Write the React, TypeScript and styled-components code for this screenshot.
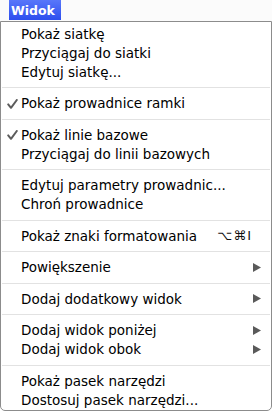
import React from "react";
import styled, { createGlobalStyle } from "styled-components";

const GlobalStyle = createGlobalStyle`
  body {
    margin: 0;
    background: #ffffff;
    font-family: "DejaVu Sans", "Liberation Sans", sans-serif;
  }
`;

const Screen = styled.div`
  width: 272px;
  height: 412px;
  overflow: hidden;
  background: #ffffff;
`;

const MenuBar = styled.div`
  height: 21px;
  display: flex;
  align-items: stretch;
  padding-left: 9px;
  background: #fbfbfb;
`;

const MenuTitle = styled.div`
  width: 52px;
  height: 20px;
  display: flex;
  align-items: center;
  padding-left: 2px;
  box-sizing: border-box;
  color: #ffffff;
  font-size: 12.5px;
  font-weight: bold;
  background: linear-gradient(#5877fa, #2d4eee);
`;

const Panel = styled.div`
  width: 270px;
  border: 1px solid #8c8c8c;
  border-radius: 0 0 5px 5px;
  background: #ffffff;
  padding: 2px 0 1px;
`;

const Item = styled.div`
  position: relative;
  height: 19px;
  display: flex;
  align-items: center;
  padding: 0 10px 0 20px;
  font-size: 13.5px;
  color: #000000;
  white-space: nowrap;
`;

const Label = styled.span`
  flex: 1;
`;

const Check = styled.svg`
  position: absolute;
  left: 6px;
  top: 5px;
`;

const Shortcut = styled.span`
  font-size: 13px;
  color: #111111;
  margin-right: 9px;
  letter-spacing: 1px;
`;

const Arrow = styled.svg`
  flex: none;
`;

const Separator = styled.div`
  height: 1px;
  margin: 6px 1px 5.5px;
  background: #e2e2e2;
`;

type Entry = {
  label: string;
  checked?: boolean;
  shortcut?: string;
  submenu?: boolean;
};

const groups: Entry[][] = [
  [
    { label: "Pokaż siatkę" },
    { label: "Przyciągaj do siatki" },
    { label: "Edytuj siatkę..." },
  ],
  [{ label: "Pokaż prowadnice ramki", checked: true }],
  [
    { label: "Pokaż linie bazowe", checked: true },
    { label: "Przyciągaj do linii bazowych" },
  ],
  [{ label: "Edytuj parametry prowadnic..." }, { label: "Chroń prowadnice" }],
  [{ label: "Pokaż znaki formatowania", shortcut: "⌥⌘I" }],
  [{ label: "Powiększenie", submenu: true }],
  [{ label: "Dodaj dodatkowy widok", submenu: true }],
  [
    { label: "Dodaj widok poniżej", submenu: true },
    { label: "Dodaj widok obok", submenu: true },
  ],
  [{ label: "Pokaż pasek narzędzi" }, { label: "Dostosuj pasek narzędzi..." }],
];

function MenuItem({ entry }: { entry: Entry }) {
  return (
    <Item>
      {entry.checked && (
        <Check width="11" height="10" viewBox="0 0 11 10">
          <path
            d="M1.2 5.4 L4 8.8 L9.8 1"
            fill="none"
            stroke="#5c5c5c"
            strokeWidth="2"
            strokeLinecap="round"
            strokeLinejoin="round"
          />
        </Check>
      )}
      <Label>{entry.label}</Label>
      {entry.shortcut && <Shortcut>{entry.shortcut}</Shortcut>}
      {entry.submenu && (
        <Arrow width="8" height="9" viewBox="0 0 8 9">
          <path d="M0 0 L8 4.5 L0 9 Z" fill="#5a5a5a" />
        </Arrow>
      )}
    </Item>
  );
}

export default function App() {
  return (
    <Screen>
      <GlobalStyle />
      <MenuBar>
        <MenuTitle>Widok</MenuTitle>
      </MenuBar>
      <Panel>
        {groups.map((group, gi) => (
          <React.Fragment key={gi}>
            {gi > 0 && <Separator />}
            {group.map((entry) => (
              <MenuItem key={entry.label} entry={entry} />
            ))}
          </React.Fragment>
        ))}
      </Panel>
    </Screen>
  );
}
